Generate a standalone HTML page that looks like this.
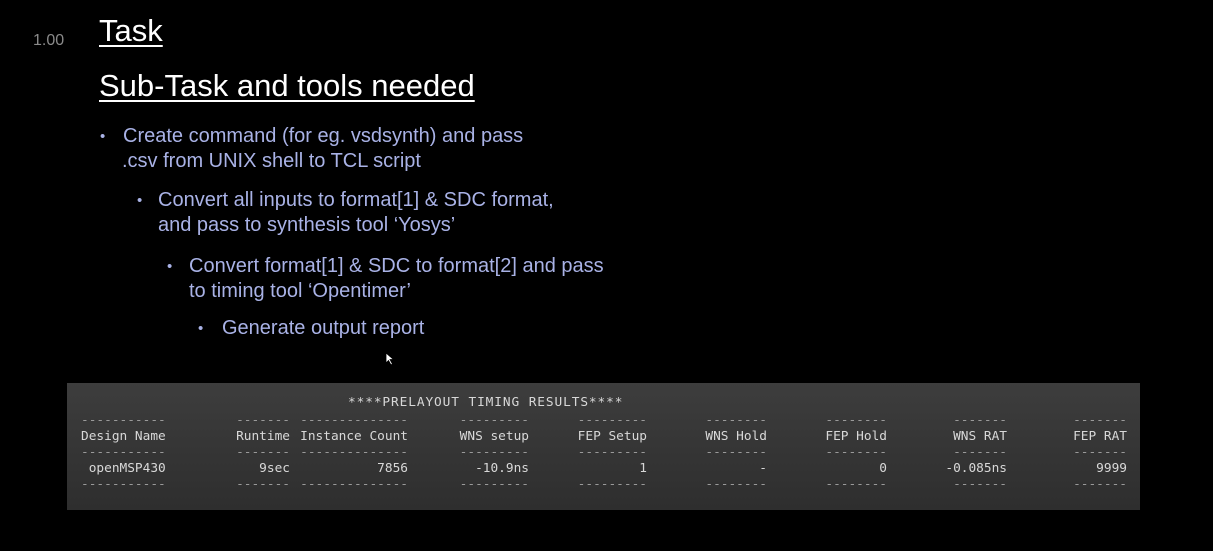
<!DOCTYPE html>
<html><head><meta charset="utf-8"><style>
html,body{margin:0;padding:0;background:#000;width:1213px;height:551px;overflow:hidden;position:relative;font-family:"Liberation Sans",sans-serif}
.a{position:absolute;white-space:nowrap}
.h{color:#fff;text-decoration:underline;text-decoration-thickness:2px;text-underline-offset:4px}
.b{position:absolute;white-space:nowrap;color:#a9b2e6;font-size:20px;line-height:25px}
.p{position:absolute;color:#a9b2e6;font-size:15px;line-height:25px}
.box{position:absolute;left:67px;top:383px;width:1073px;height:127px;background:linear-gradient(#3d3d3d,#2e2e2e)}
.m{position:absolute;font-family:"DejaVu Sans Mono","Liberation Mono",monospace;font-size:12.8px;color:#d8d8d8;white-space:pre;line-height:16px}
.d{color:#9a9a9a}
</style></head><body>
<div class="a" style="left:33px;top:32px;color:#8a8a8a;font-size:16px">1.00</div>
<div class="a h" style="left:99px;top:13px;font-size:31px">Task</div>
<div class="a h" style="left:99px;top:68px;font-size:31px">Sub-Task and tools needed</div>
<div class="p" style="left:100px;top:124px">•</div><div class="b" style="left:123px;top:124px">Create command (for eg. vsdsynth) and pass</div>
<div class="b" style="left:122px;top:149px">.csv from UNIX shell to TCL script</div>
<div class="p" style="left:137px;top:188px">•</div><div class="b" style="left:158px;top:188px">Convert all inputs to format[1] &amp; SDC format,</div>
<div class="b" style="left:158px;top:213px">and pass to synthesis tool ‘Yosys’</div>
<div class="p" style="left:167px;top:254px">•</div><div class="b" style="left:189px;top:254px">Convert format[1] &amp; SDC to format[2] and pass</div>
<div class="b" style="left:189px;top:279px">to timing tool ‘Opentimer’</div>
<div class="p" style="left:198px;top:316px">•</div><div class="b" style="left:222px;top:316px">Generate output report</div>
<svg class="a" style="left:385px;top:352px" width="10" height="14"><path d="M1 1 L1 11 L3.5 8.5 L6 13 L7.5 12 L5 7.5 L8.5 7.5 Z" fill="#fff" stroke="#000" stroke-width="0.8"/></svg>
<div class="box"></div>
<div class="m" style="left:348px;top:395px;letter-spacing:0.9px">****PRELAYOUT TIMING RESULTS****</div>
<div class="m" style="left:81px;top:413px;text-align:left"><span class="d">-----------</span><br>Design Name<br><span class="d">-----------</span><br> openMSP430<br><span class="d">-----------</span></div>
<div class="m" style="right:923px;top:413px;text-align:right"><span class="d">-------</span><br>Runtime<br><span class="d">-------</span><br>9sec<br><span class="d">-------</span></div>
<div class="m" style="right:805px;top:413px;text-align:right"><span class="d">--------------</span><br>Instance Count<br><span class="d">--------------</span><br>7856<br><span class="d">--------------</span></div>
<div class="m" style="right:684px;top:413px;text-align:right"><span class="d">---------</span><br>WNS setup<br><span class="d">---------</span><br>-10.9ns<br><span class="d">---------</span></div>
<div class="m" style="right:566px;top:413px;text-align:right"><span class="d">---------</span><br>FEP Setup<br><span class="d">---------</span><br>1<br><span class="d">---------</span></div>
<div class="m" style="right:446px;top:413px;text-align:right"><span class="d">--------</span><br>WNS Hold<br><span class="d">--------</span><br>-<br><span class="d">--------</span></div>
<div class="m" style="right:326px;top:413px;text-align:right"><span class="d">--------</span><br>FEP Hold<br><span class="d">--------</span><br>0<br><span class="d">--------</span></div>
<div class="m" style="right:206px;top:413px;text-align:right"><span class="d">-------</span><br>WNS RAT<br><span class="d">-------</span><br>-0.085ns<br><span class="d">-------</span></div>
<div class="m" style="right:86px;top:413px;text-align:right"><span class="d">-------</span><br>FEP RAT<br><span class="d">-------</span><br>9999<br><span class="d">-------</span></div>
</body></html>
